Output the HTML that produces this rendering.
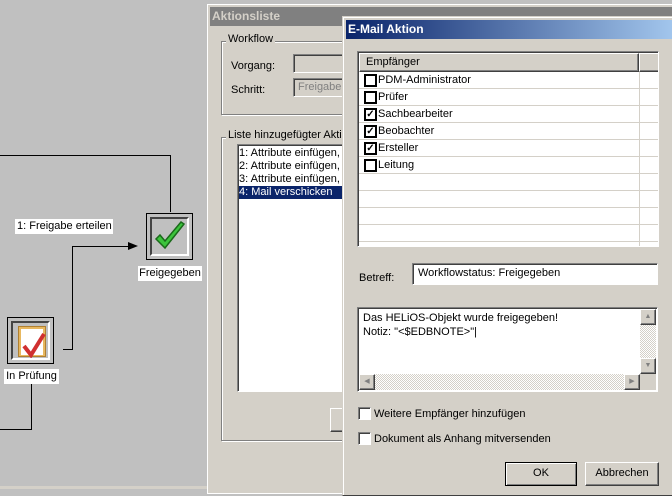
<!DOCTYPE html>
<html><head><meta charset="utf-8"><style>
*{margin:0;padding:0;box-sizing:border-box}
body{width:672px;height:489px;overflow:hidden;position:relative;background:#c0c0c0;font-family:"Liberation Sans",sans-serif;font-size:11px;color:#000}
.a{position:absolute}
.sunk{border:1px solid;border-color:#808080 #fff #fff #808080;box-shadow:inset 1px 1px 0 #404040}
.btn{background:#d4d0c8;border:1px solid;border-color:#fff #404040 #404040 #fff;box-shadow:inset -1px -1px 0 #808080;text-align:center;line-height:20px}
.grp{border:1px solid #808080;box-shadow:1px 1px 0 #fff, inset 1px 1px 0 #fff}
.lg{background:#d4d0c8;padding:0 2px}
.cb{width:13px;height:13px;border:2px solid #000;background:#fff;font-size:10px;line-height:9px;text-align:center;font-weight:bold}
.cb2{width:13px;height:13px;border:1px solid;border-color:#808080 #fff #fff #808080;background:#fff;box-shadow:inset 1px 1px 0 #404040}
.row{position:absolute;left:0;width:300px;height:17px;border-bottom:1px solid #d4d0c8}
</style></head><body>
<div class="a" style="left:0;top:155px;width:171px;height:1px;background:#000"></div>
<div class="a" style="left:170px;top:155px;width:1px;height:57px;background:#000"></div>
<div class="a" style="left:15px;top:219px;width:98px;height:15px;background:#fff;padding-left:2px;line-height:15px">1: Freigabe erteilen</div>
<div class="a" style="left:72px;top:246px;width:58px;height:1px;background:#000"></div>
<div class="a" style="left:128px;top:242px;width:0;height:0;border-left:10px solid #000;border-top:4px solid transparent;border-bottom:4px solid transparent"></div>
<div class="a" style="left:72px;top:246px;width:1px;height:104px;background:#000"></div>
<div class="a" style="left:63px;top:349px;width:10px;height:1px;background:#000"></div>
<div class="a" style="left:146px;top:213px;width:47px;height:47px;border:1px solid #000;background:#c0c0c0"><div style="position:absolute;left:3px;top:3px;width:39px;height:39px;border:2px solid #444;border-right-color:#fff;border-bottom-color:#fff"></div>
<svg class="a" style="left:6px;top:6px" width="34" height="34" viewBox="0 0 34 34"><path d="M3 19 L12 28 L31 4 L28 2 L12 21 L7 15 Z" fill="#3cc43c" stroke="#1a6a1a" stroke-width="1.5"/></svg></div>
<div class="a" style="left:138px;top:266px;width:64px;height:15px;background:#fff;line-height:15px;text-align:center">Freigegeben</div>
<div class="a" style="left:7px;top:317px;width:47px;height:47px;border:1px solid #000;background:#c0c0c0"><div style="position:absolute;left:3px;top:3px;width:39px;height:39px;border:2px solid #444;border-right-color:#fff;border-bottom-color:#fff"></div>
<div class="a" style="left:10px;top:8px;width:28px;height:31px;background:#e8b860;border:1px solid #b08030"></div>
<div class="a" style="left:13px;top:11px;width:22px;height:26px;background:#fff"></div>
<svg class="a" style="left:10px;top:10px" width="30" height="30"><path d="M6 18 L13 27 L26 6" fill="none" stroke="#d03030" stroke-width="4"/></svg></div>
<div class="a" style="left:4px;top:369px;width:55px;height:15px;background:#fff;line-height:15px;text-align:center">In Prüfung</div>
<div class="a" style="left:31px;top:384px;width:1px;height:46px;background:#000"></div>
<div class="a" style="left:0;top:429px;width:32px;height:1px;background:#000"></div>
<div class="a" style="left:0;top:486px;width:208px;height:3px;background:#d4d0c8"></div>
<div class="a" style="left:207px;top:4px;width:480px;height:490px;background:#d4d0c8;border:1px solid #fff">
<div class="a" style="left:2px;top:2px;right:0;height:19px;background:#808080;color:#d4d0c8;font-weight:bold;font-size:12px;line-height:19px;padding-left:2px">Aktionsliste</div>
<div class="a grp" style="left:13px;top:36px;width:300px;height:74px"></div>
<div class="a lg" style="left:18px;top:28px">Workflow</div>
<div class="a" style="left:23px;top:55px">Vorgang:</div>
<div class="a sunk" style="left:85px;top:49px;width:100px;height:19px;background:#d4d0c8"></div>
<div class="a" style="left:23px;top:79px">Schritt:</div>
<div class="a sunk" style="left:85px;top:73px;width:100px;height:19px;background:#d4d0c8;color:#808080;padding-left:4px;line-height:17px">Freigabe</div>
<div class="a grp" style="left:13px;top:132px;width:300px;height:304px"></div>
<div class="a lg" style="left:18px;top:124px">Liste hinzugefügter Aktionen</div>
<div class="a sunk" style="left:29px;top:139px;width:120px;height:248px;background:#fff;line-height:13px;padding:2px 1px">
<div>1: Attribute einfügen,</div><div>2: Attribute einfügen,</div><div>3: Attribute einfügen,</div><div style="background:#0a246a;color:#fff">4: Mail verschicken</div></div>
<div class="a btn" style="left:122px;top:403px;width:40px;height:24px"></div>
</div>
<div class="a" style="left:342px;top:16px;width:340px;height:480px;background:#d4d0c8;border:1px solid;border-color:#d4d0c8 #404040 #404040 #d4d0c8;box-shadow:inset 1px 1px 0 #fff">
<div class="a" style="left:3px;top:3px;right:0;height:19px;background:linear-gradient(90deg,#0a246a,#a6caf0);color:#fff;font-weight:bold;font-size:12px;line-height:19px;padding-left:2px">E-Mail Aktion</div>
<div class="a sunk" style="left:14px;top:34px;width:302px;height:196px;background:#fff;overflow:hidden">
<div class="a btn" style="left:1px;top:1px;width:280px;height:19px;text-align:left;padding-left:6px;line-height:17px">Empfänger</div>
<div class="a btn" style="left:281px;top:1px;width:30px;height:19px"></div>
<div class="a" style="left:281px;top:20px;width:1px;height:180px;background:#d4d0c8"></div>
<div class="a" style="left:1px;top:20px;width:300px">
<div class="row" style="top:0"><div class="a cb" style="left:5px;top:2px"></div><span class="a" style="left:19px;top:2px">PDM-Administrator</span></div>
<div class="row" style="top:17px"><div class="a cb" style="left:5px;top:2px"></div><span class="a" style="left:19px;top:2px">Prüfer</span></div>
<div class="row" style="top:34px"><div class="a cb" style="left:5px;top:2px">✓</div><span class="a" style="left:19px;top:2px">Sachbearbeiter</span></div>
<div class="row" style="top:51px"><div class="a cb" style="left:5px;top:2px">✓</div><span class="a" style="left:19px;top:2px">Beobachter</span></div>
<div class="row" style="top:68px"><div class="a cb" style="left:5px;top:2px">✓</div><span class="a" style="left:19px;top:2px">Ersteller</span></div>
<div class="row" style="top:85px"><div class="a cb" style="left:5px;top:2px"></div><span class="a" style="left:19px;top:2px">Leitung</span></div>
<div class="row" style="top:102px"></div><div class="row" style="top:119px"></div><div class="row" style="top:136px"></div><div class="row" style="top:153px"></div><div class="row" style="top:170px"></div>
</div></div>
<div class="a" style="left:16px;top:255px">Betreff:</div>
<div class="a sunk" style="left:69px;top:246px;width:246px;height:22px;background:#fff;padding-left:5px;line-height:19px">Workflowstatus: Freigegeben</div>
<div class="a sunk" style="left:14px;top:290px;width:301px;height:85px;background:#fff;line-height:14px;padding:3px 5px">Das HELiOS-Objekt wurde freigegeben!<br>Notiz: "&lt;$EDBNOTE&gt;"|
<div class="a" style="right:1px;top:1px;width:16px;height:65px;background:repeating-conic-gradient(#d4d0c8 0 25%,#fff 0 50%) 0 0/2px 2px"><div class="btn" style="height:16px;font-size:7px;line-height:14px;color:#808080">▲</div><div class="btn" style="position:absolute;bottom:0;width:16px;height:16px;font-size:7px;line-height:14px;color:#808080">▼</div></div>
<div class="a" style="left:1px;bottom:1px;width:281px;height:16px;background:repeating-conic-gradient(#d4d0c8 0 25%,#fff 0 50%) 0 0/2px 2px"><div class="btn" style="width:16px;height:16px;font-size:7px;line-height:14px;color:#808080">◀</div><div class="btn" style="position:absolute;right:0;top:0;width:16px;height:16px;font-size:7px;line-height:14px;color:#808080">▶</div></div>
<div class="a" style="right:1px;bottom:1px;width:16px;height:16px;background:#d4d0c8"></div>
</div>
<div class="a cb2" style="left:15px;top:390px"></div>
<div class="a" style="left:31px;top:391px">Weitere Empfänger hinzufügen</div>
<div class="a cb2" style="left:15px;top:415px"></div>
<div class="a" style="left:31px;top:416px">Dokument als Anhang mitversenden</div>
<div class="a btn" style="left:162px;top:445px;width:72px;height:24px;border-color:#000;box-shadow:inset 1px 1px 0 #fff,inset -1px -1px 0 #808080">OK</div>
<div class="a btn" style="left:242px;top:445px;width:74px;height:24px">Abbrechen</div>
</div>
</body></html>
